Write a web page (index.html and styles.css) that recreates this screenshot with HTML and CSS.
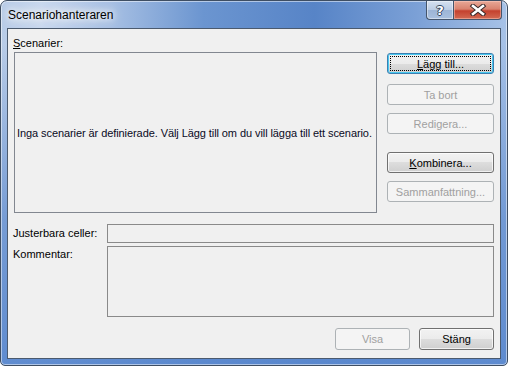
FILE: index.html
```html
<!DOCTYPE html>
<html lang="sv">

<head>
    <meta charset="UTF-8">
    <meta name="viewport" content="width=device-width, initial-scale=1.0">
    <title>Scenariohanteraren</title>
    <link rel="stylesheet" href="styles.css">
</head>

<body>
    <div class="window">
        <div class="titlebar">
            <span class="title">Scenariohanteraren</span>
            <div class="caption">
                <div class="cap help">?</div>
                <div class="cap close">
                    <svg width="18" height="12" viewBox="0 0 18 12">
                        <path d="M4 2 L14 10 M14 2 L4 10" stroke="#3a2a2a" stroke-width="4.6" stroke-linecap="square" fill="none" />
                        <path d="M4 2 L14 10 M14 2 L4 10" stroke="#ffffff" stroke-width="2.6" stroke-linecap="square" fill="none" />
                    </svg>
                </div>
            </div>
        </div>

        <div class="client">
            <div class="top">
                <div class="scen">
                    <div class="label"><u>S</u>cenarier:</div>
                    <div class="listbox">
                        <span>Inga scenarier är definierade. Välj Lägg till om du vill lägga till ett scenario.</span>
                    </div>
                </div>
                <div class="side">
                    <button class="btn default"><span class="focus"><u>L</u>ägg till...</span></button>
                    <button class="btn" disabled>Ta bort</button>
                    <button class="btn" disabled>Redigera...</button>
                    <button class="btn spaced"><u>K</u>ombinera...</button>
                    <button class="btn" disabled>Sammanfattning...</button>
                </div>
            </div>

            <div class="fields">
                <div class="flabel">Justerbara celler:</div>
                <div class="textbox"></div>
                <div class="flabel top-aligned">Kommentar:</div>
                <div class="textbox area"></div>
            </div>

            <div class="footer">
                <button class="btn wide" disabled>Visa</button>
                <button class="btn wide">Stäng</button>
            </div>
        </div>
    </div>
</body>

</html>
```

FILE: styles.css
```css
html,
body {
    margin: 0;
    height: 100%;
}

body {
    font-family: "Liberation Sans", Arial, sans-serif;
    font-size: 11px;
    color: #000;
    background: #fff;
}

.window {
    width: 508px;
    height: 366px;
    box-sizing: border-box;
    border: 1px solid #3e4e63;
    border-radius: 7px 7px 5px 5px;
    background:
        linear-gradient(to bottom, rgba(96, 140, 206, 0) 0%, rgba(96, 140, 206, 0) 12%, rgba(96, 140, 206, 0.75) 60%, rgba(90, 136, 206, 0.95) 100%),
        linear-gradient(to right, #b7cbe7 0%, #c9d8ee 8%, #a6bfe3 22%, #6b95d0 40%, #5784c7 62%, #7ba0d6 82%, #a7c2e7 100%);
    box-shadow: inset 0 0 0 1px rgba(255, 255, 255, 0.5);
    display: flex;
    flex-direction: column;
    overflow: hidden;
}

.titlebar {
    height: 27px;
    flex: none;
    display: flex;
    align-items: flex-start;
    justify-content: space-between;
}

.title {
    margin: 7px 0 0 7px;
    font-size: 12px;
    line-height: 15px;
    color: #000;
    text-shadow: 0 0 6px #fff, 0 0 10px #fff, 0 0 14px rgba(255, 255, 255, 0.9);
}

.caption {
    display: flex;
    margin-right: 5px;
}

.cap {
    height: 18px;
    border: 1px solid #44556c;
    border-top: none;
    display: flex;
    align-items: center;
    justify-content: center;
}

.help {
    width: 26px;
    border-right: none;
    border-radius: 0 0 0 4px;
    background: linear-gradient(#d5e1f0 0%, #bccde4 48%, #9db5d6 52%, #a9c0de 100%);
    box-shadow: inset 0 0 0 1px rgba(255, 255, 255, 0.45);
    color: #fff;
    font-family: "DejaVu Sans", sans-serif;
    font-weight: bold;
    font-size: 13px;
    text-shadow: -1px 0 #34465e, 1px 0 #34465e, 0 -1px #34465e, 0 1px #34465e;
}

.close {
    width: 47px;
    border-radius: 0 0 4px 0;
    background: linear-gradient(#e8a897 0%, #d9836f 45%, #c4412e 55%, #d26a53 100%);
    box-shadow: inset 0 0 0 1px rgba(255, 210, 200, 0.45);
}

.client {
    flex: 1;
    margin: 0 6px 6px;
    border: 1px solid #4b5a6e;
    background: #f0f0f0;
    padding: 8px 6px 0 5px;
    display: flex;
    flex-direction: column;
}

.top {
    display: flex;
    align-items: flex-start;
}

.label {
    line-height: 13px;
    height: 13px;
}

.listbox {
    margin: 2px 0 0 1px;
    width: 363px;
    height: 161px;
    box-sizing: border-box;
    border: 1px solid #828790;
    display: flex;
    align-items: center;
    padding-left: 2px;
    white-space: nowrap;
    letter-spacing: -0.08px;
    color: #0a0a1e;
}

.side {
    margin: 16px 0 0 10px;
    display: flex;
    flex-direction: column;
}

.btn {
    width: 107px;
    height: 21px;
    margin: 0 0 8px;
    padding: 0;
    box-sizing: border-box;
    border: 1px solid #707070;
    border-radius: 3px;
    background: linear-gradient(#f2f2f2 0%, #ebebeb 50%, #dddddd 50%, #cfcfcf 100%);
    box-shadow: inset 0 0 0 1px rgba(255, 255, 255, 0.7);
    font-family: inherit;
    font-size: 11px;
    color: #000;
    display: flex;
    align-items: center;
    justify-content: center;
}

.btn:first-child {
    margin-bottom: 10px;
}

.btn.spaced {
    margin-top: 10px;
}

.btn:disabled {
    border-color: #adb2b5;
    background: #f4f4f4;
    box-shadow: none;
    color: #a0a0a0;
}

.btn.default {
    border-color: #3c7fb1;
    box-shadow: inset 0 0 0 1px #48c8f0;
}

.focus {
    align-self: stretch;
    flex: 1;
    margin: 2px;
    border: 1px dotted #000;
    display: flex;
    align-items: center;
    justify-content: center;
}

.fields {
    margin-top: 11px;
    display: grid;
    grid-template-columns: 94px 387px;
    row-gap: 3px;
}

.flabel {
    align-self: center;
    line-height: 13px;
}

.flabel.top-aligned {
    align-self: start;
    margin-top: 2px;
}

.textbox {
    height: 19px;
    box-sizing: border-box;
    border: 1px solid #8a8a8a;
}

.textbox.area {
    height: 71px;
}

.footer {
    margin-top: 11px;
    display: flex;
    justify-content: flex-end;
    gap: 9px;
}

.btn.wide {
    width: 75px;
    height: 22px;
    margin: 0;
}
```
